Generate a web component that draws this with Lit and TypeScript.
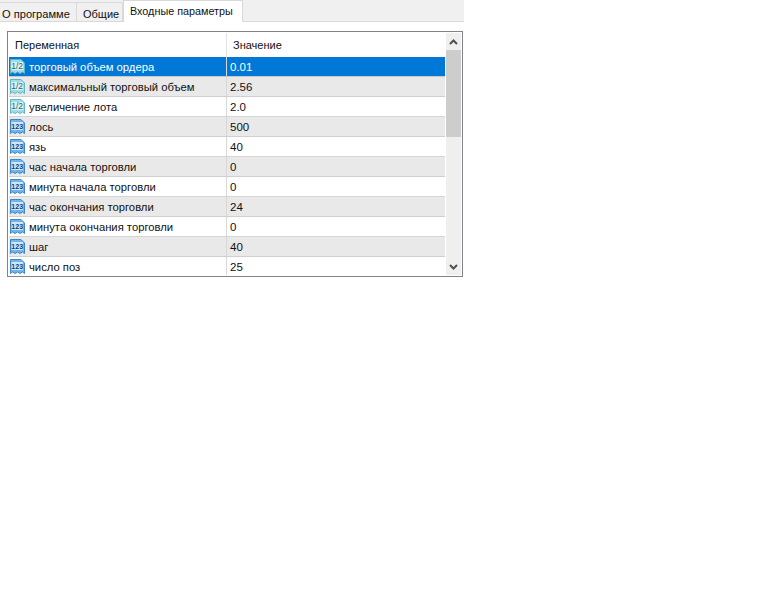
import { LitElement, html, css, svg } from "lit";
import { customElement } from "lit/decorators.js";

type Kind = "d" | "i";
const rows: [Kind, string, string][] = [
  ["d", "торговый объем ордера", "0.01"],
  ["d", "максимальный торговый объем", "2.56"],
  ["d", "увеличение лота", "2.0"],
  ["i", "лось", "500"],
  ["i", "язь", "40"],
  ["i", "час начала торговли", "0"],
  ["i", "минута начала торговли", "0"],
  ["i", "час окончания торговли", "24"],
  ["i", "минута окончания торговли", "0"],
  ["i", "шаг", "40"],
  ["i", "число поз", "25"],
];

const icon = (k: Kind) => {
  const fill = k === "d" ? "#9fdde6" : "#72b4ea";
  const edge = k === "d" ? "#62b5c4" : "#3d86c6";
  const inner = k === "d" ? "#d8f3f6" : "#cfe6fa";
  const ink = k === "d" ? "#2f5f6c" : "#0f3f78";
  return svg`<svg class="ico" width="17" height="17" viewBox="0 0 17 17">
    <path d="M1.500 1.500H12L15.500 5V15.500L13.500 14L11 15.500L8.500 14L6 15.500L3.500 14L1.500 15.500Z" fill="${fill}" stroke="${edge}" stroke-width="1"/>
    <rect x="2.500" y="4" width="11.500" height="8" fill="${inner}"/>
    <text x="8.200" y="11" text-anchor="middle" font-family="Liberation Sans, sans-serif" font-size="${k === "d" ? 8.5 : 7}" font-weight="${k === "d" ? 400 : 700}" fill="${ink}">${k === "d" ? "1/2" : "123"}</text>
  </svg>`;
};

@customElement("app-root")
export class AppRoot extends LitElement {
  static styles = css`
    :host { display: block; width: 768px; height: 614px; background: #fff; font-family: "Liberation Sans", Arial, sans-serif; font-size: 11px; color: #111; overflow: hidden; }
    .tabs { width: 464px; height: 22px; box-sizing: border-box; background: #f0f0f0; border-bottom: 1px solid #d9d9d9; display: flex; align-items: flex-end; }
    .tab { height: 20px; margin-bottom: -1px; box-sizing: border-box; padding: 5px 0 0 2px; border-right: 1px solid #d9d9d9; border-top: 1px solid #d9d9d9; }
    .t1 { width: 77px; font-size: 11.1px; }
    .t2 { width: 46px; padding-left: 6px; }
    .t3 { width: 120px; height: 22px; background: #fff; border: 1px solid #d9d9d9; border-bottom: 0; padding: 4px 0 0 6px; font-size: 10.8px; }
    .frame { box-sizing: border-box; width: 456px; height: 246px; margin: 9px 0 0 7px; padding: 1px; border: 1px solid #82828c; display: flex; background: #fff; }
    .list { width: 436px; flex: none; overflow: hidden; }
    .head, .row { display: grid; grid-template-columns: 217px 1fr; }
    .head { height: 24px; }
    .head div { padding: 6px 0 0 6px; }
    .head div + div { border-left: 1px solid #e4e4e4; padding-left: 6px; }
    .row { height: 20px; box-sizing: border-box; border-bottom: 1px solid #d5d5d5; }
    .row.alt { background: #e9e9e9; border-bottom-color: #cfcfcf; }
    .row.sel { background: #0078d7; color: #fff; border-bottom-color: #c8c8c8; }
    .name { display: flex; align-items: center; gap: 3px; font-size: 11.25px; }
    .val { border-left: 1px solid #d8d8d8; padding: 4px 0 0 3px; font-size: 11.5px; }
    .ico { flex: none; }
    .scroll { width: 15px; margin-left: 1px; flex: none; background: #efefef; display: flex; flex-direction: column; }
    .btn { height: 17px; display: flex; align-items: center; justify-content: center; flex: none; }
    .thumb { height: 87px; background: #cdcdcd; flex: none; }
    .gap { flex: 1; }
  `;
  render() {
    return html`
      <div class="tabs">
        <div class="tab t1">О программе</div>
        <div class="tab t2">Общие</div>
        <div class="tab t3">Входные параметры</div>
      </div>
      <div class="frame">
        <div class="list">
          <div class="head"><div>Переменная</div><div>Значение</div></div>
          ${rows.map((r, i) => html`
            <div class="row ${i === 0 ? "sel" : i % 2 ? "alt" : ""}">
              <div class="name">${icon(r[0])}<span>${r[1]}</span></div>
              <div class="val">${r[2]}</div>
            </div>`)}
        </div>
        <div class="scroll">
          <div class="btn"><svg width="9" height="6" viewBox="0 0 9 6"><path d="M1 5L4.500 1.500L8 5" fill="none" stroke="#505050" stroke-width="2"/></svg></div>
          <div class="thumb"></div>
          <div class="gap"></div>
          <div class="btn"><svg width="9" height="6" viewBox="0 0 9 6"><path d="M1 1L4.500 4.500L8 1" fill="none" stroke="#505050" stroke-width="2"/></svg></div>
        </div>
      </div>
    `;
  }
}
